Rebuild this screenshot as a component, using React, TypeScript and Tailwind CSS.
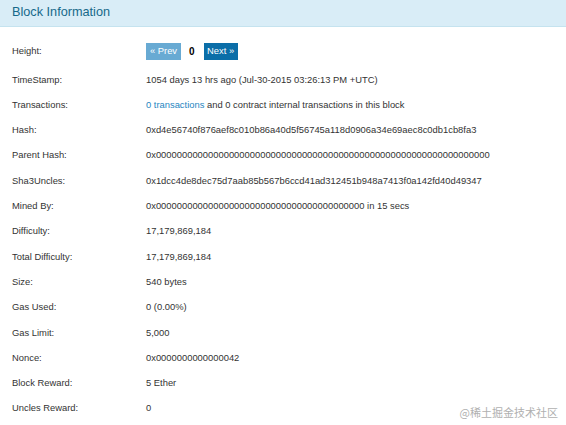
import React from "react";

const rows: { label: string; value: React.ReactNode }[] = [
  { label: "TimeStamp:", value: "1054 days 13 hrs ago (Jul-30-2015 03:26:13 PM +UTC)" },
  {
    label: "Transactions:",
    value: (
      <span>
        <span className="text-[#1f86bf]">0 transactions</span> and 0 contract internal transactions in this block
      </span>
    ),
  },
  { label: "Hash:", value: "0xd4e56740f876aef8c010b86a40d5f56745a118d0906a34e69aec8c0db1cb8fa3" },
  { label: "Parent Hash:", value: "0x0000000000000000000000000000000000000000000000000000000000000000" },
  { label: "Sha3Uncles:", value: "0x1dcc4de8dec75d7aab85b567b6ccd41ad312451b948a7413f0a142fd40d49347" },
  { label: "Mined By:", value: "0x0000000000000000000000000000000000000000 in 15 secs" },
  { label: "Difficulty:", value: "17,179,869,184" },
  { label: "Total Difficulty:", value: "17,179,869,184" },
  { label: "Size:", value: "540 bytes" },
  { label: "Gas Used:", value: "0 (0.00%)" },
  { label: "Gas Limit:", value: "5,000" },
  { label: "Nonce:", value: "0x0000000000000042" },
  { label: "Block Reward:", value: "5 Ether" },
  { label: "Uncles Reward:", value: "0" },
];

export default function App() {
  return (
    <div
      className="relative w-[566px] h-[425px] bg-white text-[#333] overflow-hidden"
      style={{ fontFamily: '"Liberation Sans", Arial, sans-serif' }}
    >
      <div className="h-[27px] bg-[#d9edf7] border-b border-[#c5e3ef] flex items-center pl-[12px]">
        <span className="text-[12.7px] text-[#16698a]">Block Information</span>
      </div>
      <div className="pt-[10px]">
        <div className="h-[28px] mb-[2px] flex items-center text-[9.4px]">
          <div className="w-[146px] pl-[12px]">Height:</div>
          <div className="flex items-center">
            <span className="h-[17px] w-[35px] flex items-center justify-center bg-[#68aad3] text-white text-[9.4px]">
              « Prev
            </span>
            <span className="ml-[8px] mr-[9px] font-bold text-[10px] text-black">0</span>
            <span className="h-[17px] w-[34px] flex items-center justify-center bg-[#0b6ea8] text-white text-[9.4px]">
              Next »
            </span>
          </div>
        </div>
        {rows.map((r) => (
          <div key={r.label} className="h-[25.3px] flex items-center text-[9.4px]">
            <div className="w-[146px] pl-[12px] shrink-0">{r.label}</div>
            <div className="whitespace-nowrap">{r.value}</div>
          </div>
        ))}
      </div>
      <div
        className="absolute right-[8px] bottom-[5px] text-[11px] text-[#b0b0b0]"
        style={{ fontFamily: '"Noto Sans CJK SC", sans-serif' }}
      >
        @稀土掘金技术社区
      </div>
    </div>
  );
}
